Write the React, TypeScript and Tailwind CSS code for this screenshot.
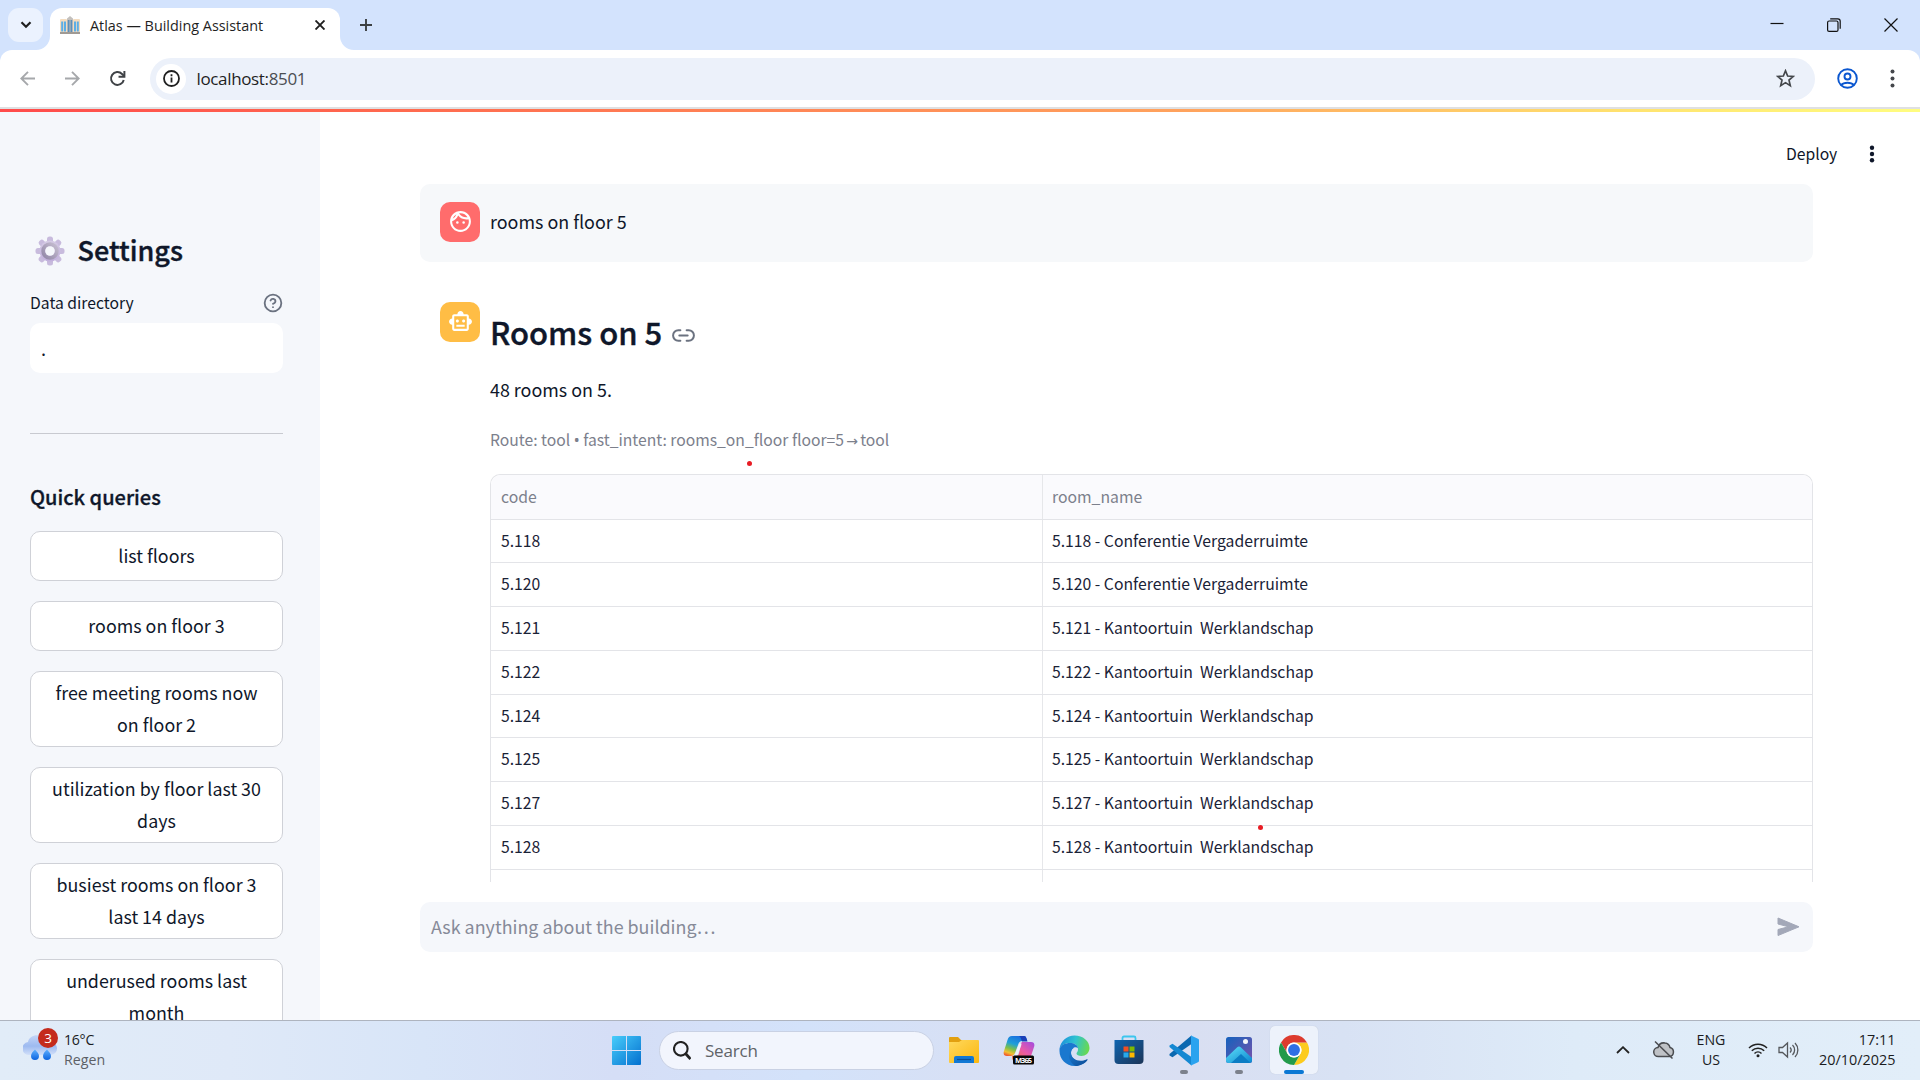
import type { ReactNode } from "react";
import { Link2, CircleHelp } from "lucide-react";
import { MdOutlineFace, MdOutlineSmartToy } from "react-icons/md";

const quickQueries = [
  ["list floors"],
  ["rooms on floor 3"],
  ["free meeting rooms now", "on floor 2"],
  ["utilization by floor last 30", "days"],
  ["busiest rooms on floor 3", "last 14 days"],
  ["underused rooms last", "month"],
];

const rooms = [
  ["5.118", "5.118 - Conferentie Vergaderruimte"],
  ["5.120", "5.120 - Conferentie Vergaderruimte"],
  ["5.121", "5.121 - Kantoortuin  Werklandschap"],
  ["5.122", "5.122 - Kantoortuin  Werklandschap"],
  ["5.124", "5.124 - Kantoortuin  Werklandschap"],
  ["5.125", "5.125 - Kantoortuin  Werklandschap"],
  ["5.127", "5.127 - Kantoortuin  Werklandschap"],
  ["5.128", "5.128 - Kantoortuin  Werklandschap"],
  ["", ""],
];

function BuildingIcon() {
  return (
    <svg width="20" height="18" viewBox="0 0 20 18">
      <rect x="0" y="3" width="7" height="15" rx="1" fill="#f3dcc0" />
      <rect x="13" y="3" width="7" height="15" rx="1" fill="#f3dcc0" />
      <path d="M7 2.500 10 0l3 2.500V18H7Z" fill="#c3c0bd" />
      <path d="M1.200 5.500h2v10h-2zM4 5.500h2v10H4zM14 5.500h2v10h-2zM16.800 5.500h2v10h-2z" fill="#5caee6" />
      <path d="M7.800 4h1.700v12H7.800zM10.500 4h1.700v12h-1.700z" fill="#5d8fb8" />
      <path d="M0 16h20v2H0z" fill="#a09a94" />
    </svg>
  );
}

function TabStrip() {
  return (
    <header className="flex h-[50px] shrink-0 items-start bg-[#d3e3fd] pt-2 pl-2">
      <button className="flex h-[34px] w-[35px] items-center justify-center rounded-[11px] bg-[#ebf2fe]">
        <svg width="12" height="8" viewBox="0 0 12 8" fill="none" stroke="#1f1f1f" strokeWidth="2.200">
          <path d="M1.500 1.200 6 5.700l4.500-4.500" />
        </svg>
      </button>
      <div className="relative ml-[7px] flex h-[42px] w-[290px] items-center rounded-t-[12px] bg-white pb-2 pl-[10px]">
        <svg className="absolute bottom-0 -left-[14px]" width="14" height="14" viewBox="0 0 14 14">
          <path d="M14 0v14H0A14 14 0 0 0 14 0Z" fill="#fff" />
        </svg>
        <svg className="absolute -right-[14px] bottom-0" width="14" height="14" viewBox="0 0 14 14">
          <path d="M0 0v14h14A14 14 0 0 1 0 0Z" fill="#fff" />
        </svg>
        <BuildingIcon />
        <span className="mt-px ml-[10px] w-[225px] text-[14.400px] leading-[20px] whitespace-pre text-[#1f1f1f]">Atlas — Building Assistant</span>
        <svg width="10" height="10" viewBox="0 0 10 10" fill="none" stroke="#1f1f1f" strokeWidth="1.900">
          <path d="m.5.500 9 9M9.500.500l-9 9" />
        </svg>
      </div>
      <svg className="mt-[11px] ml-5" width="12" height="12" viewBox="0 0 12 12" stroke="#3c4043" strokeWidth="1.900">
        <path d="M6 0v12M0 6h12" />
      </svg>
      <div className="mt-[10px] mr-[22px] ml-auto flex gap-[43px]">
        <svg width="14" height="14" viewBox="0 0 14 14" stroke="#111" strokeWidth="1.200">
          <path d="M.5 5.500h13" />
        </svg>
        <svg width="14" height="14" viewBox="0 0 14 14" fill="none" stroke="#111" strokeWidth="1.200">
          <rect x=".6" y="3" width="10.400" height="10.400" rx="1.500" />
          <path d="M3.200.800h7.600a2.400 2.400 0 0 1 2.400 2.400v7.600" />
        </svg>
        <svg width="14" height="14" viewBox="0 0 14 14" stroke="#111" strokeWidth="1.200">
          <path d="m.5.500 13 13M13.500.500l-13 13" />
        </svg>
      </div>
    </header>
  );
}

function Arrow({ flip }: { flip?: boolean }) {
  return (
    <svg className={flip ? "rotate-180" : ""} width="15" height="15" viewBox="0 0 15 15" fill="none" stroke="#a6a8ab" strokeWidth="1.900">
      <path d="M15 7.500H1.500M8 .800 1.300 7.500 8 14.200" />
    </svg>
  );
}

function Toolbar() {
  return (
    <div className="shrink-0 bg-[#d3e3fd]">
      <div className="flex h-[57px] items-center rounded-t-[12px] bg-white pl-5">
        <Arrow />
        <span className="ml-[30px] flex">
          <Arrow flip />
        </span>
        <svg className="mr-px mb-px ml-[29px]" width="17" height="17" viewBox="0 0 18 18" fill="none" stroke="#3f4246" strokeWidth="2.100">
          <path d="M15.600 10.500A6.800 6.800 0 1 1 13.800 4.200L16 6.400" />
          <path d="M16.300 1v6.200h-6.200" />
        </svg>
        <div className="ml-[23px] flex h-[42px] w-[1665px] items-center rounded-full bg-[#ecf1fa] pl-[6px]">
          <span className="flex size-[30px] items-center justify-center rounded-full bg-white">
            <svg width="17" height="17" viewBox="0 0 17 17" fill="none" stroke="#1f1f1f" strokeWidth="1.800">
              <circle cx="8.500" cy="8.500" r="7.500" />
              <path d="M8.500 7.500v5M8.500 4.300v2" />
            </svg>
          </span>
          <span className="mt-px ml-[10.500px] text-[17px] leading-[24px] tracking-[-0.350px] text-[#1f1f1f]">
            localhost:<span className="text-[#4b4e52]">8501</span>
          </span>
          <svg className="mr-5 ml-auto" width="19" height="19" viewBox="0 0 19 19" fill="none" stroke="#44474b" strokeWidth="1.700">
            <path d="m9.500 1.800 2.150 5.200 5.600.450-4.250 3.650 1.300 5.500-4.800-2.950-4.800 2.950 1.300-5.500L1.750 7.450l5.600-.450Z" />
          </svg>
        </div>
        <svg className="ml-[22px]" width="21" height="21" viewBox="0 0 21 21" fill="none" stroke="#0b57d0" strokeWidth="1.900">
          <circle cx="10.500" cy="10.500" r="9.300" />
          <circle cx="10.500" cy="8.500" r="3" />
          <path d="M4 17.200c3-3.300 10-3.300 13 0" />
        </svg>
        <svg className="ml-[32px]" width="5" height="19" viewBox="0 0 5 19" fill="#44474b">
          <circle cx="2.500" cy="2.500" r="2" />
          <circle cx="2.500" cy="9.500" r="2" />
          <circle cx="2.500" cy="16.500" r="2" />
        </svg>
      </div>
      <div className="h-[2px] bg-[#dfe0e2]" />
    </div>
  );
}

function GearIcon() {
  const teeth = [0, 45, 90, 135, 180, 225, 270, 315];
  return (
    <svg width="30" height="30" viewBox="0 0 30 30">
      <defs>
        <linearGradient id="gear" x1="0" y1="0" x2="0" y2="30" gradientUnits="userSpaceOnUse">
          <stop offset="0" stopColor="#d9d1e6" />
          <stop offset="1" stopColor="#bda9da" />
        </linearGradient>
        <linearGradient id="hub" x1="1" y1="0" x2="0" y2="1">
          <stop offset="0" stopColor="#c5bdd0" />
          <stop offset="1" stopColor="#9388a8" />
        </linearGradient>
      </defs>
      {teeth.map((a) => (
        <rect key={a} x="12" y=".5" width="6" height="9" rx="2.500" fill="#c8bbdd" transform={`rotate(${a} 15 15)`} />
      ))}
      <circle cx="15" cy="15" r="10.500" fill="url(#gear)" />
      <circle cx="15" cy="15" r="6.700" fill="none" stroke="url(#hub)" strokeWidth="4" />
      <circle cx="15" cy="15" r="4.800" fill="#f5f7fb" />
    </svg>
  );
}

function Sidebar() {
  return (
    <aside className="w-[320px] shrink-0 overflow-hidden bg-[#f5f7fb] pt-[119px] pr-[37px] pl-[30px] text-[#0f172a]">
      <div className="flex h-[40px] items-center pl-[5px]">
        <GearIcon />
        <h2 className="mb-[3px] ml-[12.500px] text-[27px] leading-[36px] font-medium [-webkit-text-stroke:0.400px_#0f172a]">Settings</h2>
      </div>
      <div className="mt-[20px] flex h-[24px] items-center justify-between">
        <span className="text-[15.700px] leading-[24px]">Data directory</span>
        <CircleHelp size={20} color="#6b7280" strokeWidth={2.200} />
      </div>
      <div className="mt-2 flex h-[50px] items-center rounded-[10px] bg-white px-[11px] text-[18px] leading-[28px]">.</div>
      <div className="mt-[60px] h-px bg-[#c8cad0]" />
      <h3 className="mt-[49px] text-[20px] leading-[28px] font-medium [-webkit-text-stroke:0.300px_#0f172a]">Quick queries</h3>
      <div className="mt-[20px] flex flex-col gap-5">
        {quickQueries.map((lines) => (
          <button key={lines[0]} className="flex min-h-[50px] shrink-0 flex-col items-center justify-center rounded-[10px] border border-[#cfd1d7] bg-white pt-[4px] pb-[6px] text-[17.850px] leading-[32px]">
            {lines.map((line) => (
              <span key={line} className="whitespace-pre">{line}</span>
            ))}
          </button>
        ))}
      </div>
    </aside>
  );
}

function Avatar({ className, children }: { className: string; children: ReactNode }) {
  return <div className={`flex size-[40px] shrink-0 items-center justify-center rounded-[10px] text-white ${className}`}>{children}</div>;
}

function RoomTable() {
  return (
    <div className="h-[408px] w-[1323px] overflow-hidden">
      <div className="rounded-t-[10px] border border-b-0 border-[#e3e4e8]">
        <div className="grid h-[44.500px] grid-cols-[552px_1fr] rounded-t-[10px] border-b border-[#e3e4e8] bg-[#fafafd] text-[15.750px] leading-[44px] text-[#7c808c]">
          <div className="border-r border-[#e6e7ea] pl-[10px]">code</div>
          <div className="pl-[9px]">room_name</div>
        </div>
        {rooms.map(([code, name], i) => (
          <div key={i} className="grid h-[43.800px] grid-cols-[552px_1fr] border-b border-[#e3e4e8] text-[15.750px] leading-[42px] text-[#1a2236]">
            <div className="border-r border-[#e6e7ea] pl-[10px]">{code}</div>
            <div className="pl-[9px] whitespace-pre">{name}</div>
          </div>
        ))}
      </div>
    </div>
  );
}

function Chat() {
  return (
    <main className="relative flex w-[1600px] flex-col pl-[100px] text-[#0f172a]">
      <div className="flex h-[72px] shrink-0 items-end pl-[1366px]">
        <span className="mb-[18px] w-[82px] text-[15.700px] leading-[24px]">Deploy</span>
        <svg className="mb-[21px]" width="8" height="18" viewBox="0 0 8 18" fill="#0f172a">
          <circle cx="4" cy="2.700" r="2.200" />
          <circle cx="4" cy="9" r="2.200" />
          <circle cx="4" cy="15.300" r="2.200" />
        </svg>
      </div>
      <section className="flex h-[78px] w-[1393px] shrink-0 gap-[10px] rounded-[10px] bg-[#f6f8fa] px-5 pt-[18px]">
        <Avatar className="bg-[#ff6c6c]">
          <MdOutlineFace className="mb-[2px] ml-px" size={25} />
        </Avatar>
        <p className="text-[17.900px] leading-[38px]">rooms on floor 5</p>
      </section>
      <section className="mt-[40px] flex h-[580px] shrink-0 gap-[10px] pl-5">
        <Avatar className="bg-[#ffbd45]">
          <MdOutlineSmartToy className="mb-[2px] ml-px" size={25} />
        </Avatar>
        <div>
          <div className="mt-[8px] flex h-[44px] items-center">
            <h1 className="text-[31px] leading-[42px] font-medium [-webkit-text-stroke:0.400px_#0f172a]">Rooms on 5</h1>
            <Link2 className="mt-[7px] ml-[8.500px]" size={25} color="#6b7280" strokeWidth={1.900} />
          </div>
          <p className="mt-[19px] text-[17.900px] leading-[32px]">48 rooms on 5.</p>
          <p className="mt-[21px] mb-[20px] h-[28px] text-[15.700px] leading-[28px] whitespace-nowrap text-[#7c808c]">
            Route: tool <span className="font-['Noto_Sans']">•</span> fast_intent: rooms_on_floor floor=5{" "}
            <span className="mx-[-1.300px] font-['DejaVu_Sans'] text-[14px]">→</span> tool
          </p>
          <RoomTable />
        </div>
      </section>
      <div className="mt-[20px] flex h-[50px] w-[1393px] shrink-0 items-center justify-between rounded-[10px] bg-[#f5f7fb] pr-[13.500px] pl-[11px]">
        <span className="mb-[2px] text-[17.900px] leading-[30px] text-[#868a98]">Ask anything about the building…</span>
        <svg width="23" height="20" viewBox="0 0 23 20" fill="#a3a8b8" stroke="#a3a8b8" strokeLinejoin="round">
          <path d="M1 1 22 9.800 1 18.500V12.500L11.500 9.800 1 7Z" />
        </svg>
      </div>
      <span className="absolute top-[349px] left-[427px] size-[5px] rounded-full bg-[#e81c24]" />
      <span className="absolute top-[713px] left-[938px] size-[5px] rounded-full bg-[#e81c24]" />
    </main>
  );
}

function Weather() {
  return (
    <svg width="36" height="34" viewBox="0 0 36 34">
      <defs>
        <linearGradient id="cloud" x1="0" y1="0" x2="0" y2="1">
          <stop offset="0" stopColor="#c3d4f6" />
          <stop offset=".55" stopColor="#9dbaf0" />
          <stop offset="1" stopColor="#d3e0f9" />
        </linearGradient>
        <linearGradient id="drop" x1="0" y1="0" x2="0" y2="1">
          <stop offset="0" stopColor="#5fb0ff" />
          <stop offset="1" stopColor="#0b63e0" />
        </linearGradient>
      </defs>
      <path d="M7 27A6.500 6.500 0 0 1 5 14C6 8 13 6 18 8c4 0 6 3 7 6h2a6 6 0 0 1 1 13Z" fill="url(#cloud)" />
      <path d="M12 21.500c2 2.500 4 4 4 6.500a4 4 0 0 1-8 0c0-2.500 2-4.500 4-6.500ZM24 21.500c2 2.500 4 4 4 6.500a4 4 0 0 1-8 0c0-2.500 2-4.500 4-6.500Z" fill="url(#drop)" />
      <circle cx="25" cy="10" r="10" fill="#c42b1c" />
      <text x="25" y="15" textAnchor="middle" fontSize="13.500" fill="#fff">3</text>
    </svg>
  );
}

function FolderIcon() {
  return (
    <svg width="30" height="28" viewBox="0 0 30 28">
      <defs>
        <linearGradient id="folder" x1="0" y1="0" x2="1" y2="1">
          <stop offset="0" stopColor="#ffd95e" />
          <stop offset="1" stopColor="#fbb70e" />
        </linearGradient>
      </defs>
      <path d="M0 2a1 1 0 0 1 1-1h8l3 3h17v5H0Z" fill="#e2a010" />
      <path d="M0 6h10l3-2h16a1 1 0 0 1 1 1v21a1 1 0 0 1-1 1H1a1 1 0 0 1-1-1Z" fill="url(#folder)" />
      <path d="M5 27v-5a2 2 0 0 1 2-2h16a2 2 0 0 1 2 2v5Z" fill="#1178d4" />
      <path d="M8 23.500h14" stroke="#0a4f96" strokeWidth="1.200" />
    </svg>
  );
}

function CopilotIcon() {
  return (
    <svg width="32" height="30" viewBox="0 0 32 30">
      <defs>
        <linearGradient id="copA" x1=".6" y1="0" x2=".2" y2="1">
          <stop offset="0" stopColor="#1a6fe0" />
          <stop offset=".4" stopColor="#1fa0d8" />
          <stop offset=".65" stopColor="#7cc04a" />
          <stop offset=".85" stopColor="#f3c032" />
          <stop offset="1" stopColor="#f0582e" />
        </linearGradient>
        <linearGradient id="copB" x1="1" y1="0" x2=".2" y2="1">
          <stop offset="0" stopColor="#a04be0" />
          <stop offset=".5" stopColor="#ea5aa8" />
          <stop offset="1" stopColor="#f5733f" />
        </linearGradient>
      </defs>
      <path d="M9 1h12c2 0 2.500 2 3 5h-5c-2 0-3 1-4 4l-3 8c-1 2-2 3-4 3H4c-3 0-4-2-3-5L4.500 5C5.300 2.500 6.500 1 9 1Z" fill="url(#copA)" />
      <path d="M16 1h5c2 0 2.500 2 3.500 5.500H19c-1-3-1.500-5-3-5.500Z" fill="#1a3fb8" />
      <path d="M19 7h9c3 0 4 2 3 5l-3 9c-1 4-3 6-6 6h-9c-3 0-4-3-4-6h4c2 0 2.500-1 3-3l2-8c.4-2 .6-3 1-3Z" fill="url(#copB)" />
      <path d="M17.500 9c-2 4-3 8-4.500 11" fill="none" stroke="#eef2fb" strokeWidth="2.500" />
      <rect x="10" y="20.500" width="21" height="9" rx="1.500" fill="#080808" />
      <text x="20.500" y="28" textAnchor="middle" fontSize="7.500" fontWeight="700" fill="#fff" textLength="17">M365</text>
    </svg>
  );
}

function EdgeIcon() {
  return (
    <svg width="31" height="31" viewBox="0 0 31 31">
      <defs>
        <linearGradient id="edgeTop" x1="0" y1=".3" x2="1" y2=".5">
          <stop offset="0" stopColor="#1b8fdc" />
          <stop offset=".5" stopColor="#2fc3d0" />
          <stop offset="1" stopColor="#6ad94f" />
        </linearGradient>
        <linearGradient id="edgeBot" x1="0" y1="0" x2="1" y2="1">
          <stop offset="0" stopColor="#1c7fd6" />
          <stop offset="1" stopColor="#0c4a94" />
        </linearGradient>
      </defs>
      <path d="M.5 14C1.500 6 8 .500 15.500.500c8.500 0 15 5.500 15 12.500 0 5-4 8-8 8-3 0-5-1-5-2.500 0-1 1.500-1.500 1.500-4C19 10 15 8 11 8 5.500 8 2 10.500.500 14Z" fill="url(#edgeTop)" />
      <path d="M.5 14C2 10 6 8 11 8c4 0 7.500 2 8 5-3-2-7 0-7 5 0 6 7 10 13 8 1.500-.5 3-1.500 3.500-1.500C27 28 21 31 15.500 31 7 31 .500 24 .500 16Z" fill="#1a78cf" />
      <path d="M12 13c-4 4-3 14 4.500 18 4.500 0 9.500-2.500 12-6 .3-.8-.3-1-1-.6C20 28 12 24 12 18c0-2.500 1-4 3-5.200Z" fill="url(#edgeBot)" />
    </svg>
  );
}

function StoreIcon() {
  return (
    <svg width="30" height="30" viewBox="0 0 30 30">
      <defs>
        <linearGradient id="store" x1="0" y1="0" x2="1" y2="1">
          <stop offset="0" stopColor="#0f65b0" />
          <stop offset="1" stopColor="#1d3557" />
        </linearGradient>
      </defs>
      <path d="M8.500 6V3A1.500 1.500 0 0 1 10 1.500h10A1.500 1.500 0 0 1 21.500 3v3" fill="none" stroke="#3cc6ee" strokeWidth="1.800" />
      <path d="M.5 5h29v20a4 4 0 0 1-4 4h-21a4 4 0 0 1-4-4Z" fill="url(#store)" />
      <path d="M9.500 11.500h5v5h-5z" fill="#f25022" />
      <path d="M15.500 11.500h5v5h-5z" fill="#7fba00" />
      <path d="M9.500 17.500h5v5h-5z" fill="#29a8ea" />
      <path d="M15.500 17.500h5v5h-5z" fill="#ffb900" />
    </svg>
  );
}

function CodeIcon() {
  return (
    <svg width="30" height="31" viewBox="0 0 30 31">
      <path d="M22.500.500V9L3.500 22.200.500 20.500v-1.500Z" fill="#0b68b0" />
      <path d="M22.500 30.500V22L3.500 8.800.500 10.500V12Z" fill="#1488d2" />
      <path d="M22 .500 29 3.800a1.500 1.500 0 0 1 1 1.400v20.600a1.500 1.500 0 0 1-1 1.400L22 30.500Z" fill="#2aa3ef" />
    </svg>
  );
}

function PhotosIcon() {
  return (
    <svg width="26" height="26" viewBox="0 0 26 26">
      <defs>
        <linearGradient id="photoBg" x1="0" y1="0" x2="1" y2="1">
          <stop offset="0" stopColor="#1462bd" />
          <stop offset="1" stopColor="#7a52ab" />
        </linearGradient>
        <linearGradient id="photoHill" x1="0" y1="0" x2="1" y2="1">
          <stop offset="0" stopColor="#5fe0f8" />
          <stop offset="1" stopColor="#0a86d0" />
        </linearGradient>
      </defs>
      <rect width="26" height="26" rx="2.500" fill="url(#photoBg)" />
      <path d="M0 21 11 10.500a3 3 0 0 1 4 0L26 21v2.500a2.500 2.500 0 0 1-2.500 2.500h-21A2.500 2.500 0 0 1 0 23.500Z" fill="url(#photoHill)" />
      <path d="m15 17 9 8.500-1 .5H5Z" fill="#0b7cc4" />
      <circle cx="19.500" cy="4.500" r="2.500" fill="#f4f6fb" />
    </svg>
  );
}

function ChromeIcon() {
  return (
    <svg width="30" height="30" viewBox="0 0 48 48">
      <path d="M44.800 12A24 24 0 0 1 24 48L34.400 30A12 12 0 0 0 34.400 18L24 12Z" fill="#fccb1d" />
      <path d="M3.200 12A24 24 0 0 1 44.800 12H24A12 12 0 0 0 13.600 30Z" fill="#dd3b2e" />
      <path d="M3.200 12 13.600 30A12 12 0 0 0 34.400 30L24 48A24 24 0 0 1 3.200 12Z" fill="#229a4b" />
      <circle cx="24" cy="24" r="12" fill="#fff" />
      <circle cx="24" cy="24" r="9.500" fill="#2f6fe4" />
    </svg>
  );
}

function TaskItem({ children, state }: { children: ReactNode; state?: "open" | "active" }) {
  return (
    <div className="flex w-[55px] justify-center">
      <div className={`relative flex size-[48px] items-center justify-center rounded-[5px] ${state === "active" ? "bg-[#edf2fb] shadow-[0_0_1px_#b8c0d0]" : ""}`}>
        {children}
        {state === "open" && <span className="absolute bottom-0 left-5 h-1 w-2 rounded-full bg-[#7c818c]" />}
        {state === "active" && <span className="absolute bottom-0 left-[14px] h-1 w-5 rounded-full bg-[#0a78d4]" />}
      </div>
    </div>
  );
}

function Taskbar() {
  return (
    <footer className="flex h-[60px] shrink-0 items-start border-t border-[#aeb4bf] bg-[linear-gradient(90deg,#e1ecf8_0%,#dfe9f8_12%,#d8e5f8_22%,#d5def6_32%,#d3e2fa_42%,#d7e0f5_50%,#d9dff2_62%,#d8e2f4_70%,#deebf8_82%,#e2eef9_100%)] text-[14.200px] leading-[20px] text-[#1b1c1e]">
      <div className="mt-[7px] ml-[23px] flex w-[589px]">
        <Weather />
        <div className="mt-[2px] ml-[5px]">
          <div className="tracking-[-0.300px]">16°C</div>
          <div className="text-[#5c6066]">Regen</div>
        </div>
      </div>
      <svg className="mt-[15px]" width="29" height="29" viewBox="0 0 29 29">
        <defs>
          <linearGradient id="win" x1="0" y1="0" x2="29" y2="29" gradientUnits="userSpaceOnUse">
            <stop offset="0" stopColor="#48cdfb" />
            <stop offset="1" stopColor="#0470cf" />
          </linearGradient>
        </defs>
        <path d="M1 0h13v14H0V1a1 1 0 0 1 1-1ZM15 0h13a1 1 0 0 1 1 1v13H15ZM0 15h14v14H1a1 1 0 0 1-1-1ZM15 15h14v13a1 1 0 0 1-1 1H15Z" fill="url(#win)" />
      </svg>
      <div className="mt-[10px] ml-[18px] flex h-[39px] w-[275px] items-center rounded-full border border-[#c9d1e4] bg-[#f2f5fd] pl-[13px] text-[17px] tracking-[-0.200px] text-[#5f6368]">
        <svg width="18" height="19" viewBox="0 0 18 19" fill="none" stroke="#222" strokeWidth="2.100">
          <circle cx="7.800" cy="7.800" r="6.800" />
          <path d="m12.500 12.500 5 5.500" strokeWidth="2.800" />
        </svg>
        <span className="ml-[14px]">Search</span>
      </div>
      <div className="mt-[5px] ml-[2.500px] flex">
        <TaskItem><FolderIcon /></TaskItem>
        <TaskItem><CopilotIcon /></TaskItem>
        <TaskItem><EdgeIcon /></TaskItem>
        <TaskItem><StoreIcon /></TaskItem>
        <TaskItem state="open"><CodeIcon /></TaskItem>
        <TaskItem state="open"><PhotosIcon /></TaskItem>
        <TaskItem state="active"><ChromeIcon /></TaskItem>
      </div>
      <div className="mt-[9px] mr-[24.500px] ml-auto flex h-[40px] items-center">
        <svg width="14" height="8" viewBox="0 0 14 8" fill="none" stroke="#222" strokeWidth="1.800">
          <path d="m1 7 6-5.800L13 7" />
        </svg>
        <svg className="ml-[23px]" width="22" height="18" viewBox="0 0 22 18" fill="none" stroke="#4a4c50" strokeWidth="1.500">
          <path d="M5.500 15.500a4.500 4.500 0 0 1-.5-9C6 3 9 1.500 12 2c3 .300 4.500 2.500 5 4.500a4.600 4.600 0 0 1-.5 9Z" fill="#bfc2c6" />
          <path d="m2 .500 17.500 17" />
        </svg>
        <div className="ml-[19.500px] w-[34px] text-center">
          <div>ENG</div>
          <div>US</div>
        </div>
        <svg className="ml-[20px]" width="20" height="16" viewBox="0 0 20 16" fill="none" stroke="#222" strokeWidth="1.500">
          <path d="M1 6a12.500 12.500 0 0 1 18 0M3.800 8.800a8.800 8.800 0 0 1 12.400 0M6.500 11.500a5 5 0 0 1 7 0" />
          <circle cx="10" cy="13.800" r="1.500" fill="#222" stroke="none" />
        </svg>
        <svg className="ml-[9.500px]" width="22" height="18" viewBox="0 0 22 18" fill="none" stroke="#55585c" strokeWidth="1.300">
          <path d="M1 6.500h3.500L9.500 2v14l-5-4.500H1Z" />
          <path d="M12 6.500a3.600 3.600 0 0 1 0 5M14.500 4a7 7 0 0 1 0 10M17 2a10 10 0 0 1 0 14" />
        </svg>
        <div className="ml-[18px] w-[78px] text-right text-[14.400px] whitespace-nowrap">
          <div>17:11</div>
          <div>20/10/2025</div>
        </div>
      </div>
    </footer>
  );
}

export default function App() {
  return (
    <div className="relative flex h-[1080px] w-[1920px] flex-col overflow-hidden bg-white font-['Open_Sans',sans-serif]">
      <TabStrip />
      <Toolbar />
      <div className="h-[3px] shrink-0 bg-[linear-gradient(90deg,#ff4b4b_0%,#ff6a4f_21%,#ffa35d_62%,#ffe36f_85%,#fffd80_100%)]" />
      <div className="flex min-h-0 flex-1 overflow-hidden font-['Noto_Sans_CJK_SC',sans-serif]">
        <Sidebar />
        <Chat />
      </div>
      <Taskbar />
    </div>
  );
}
